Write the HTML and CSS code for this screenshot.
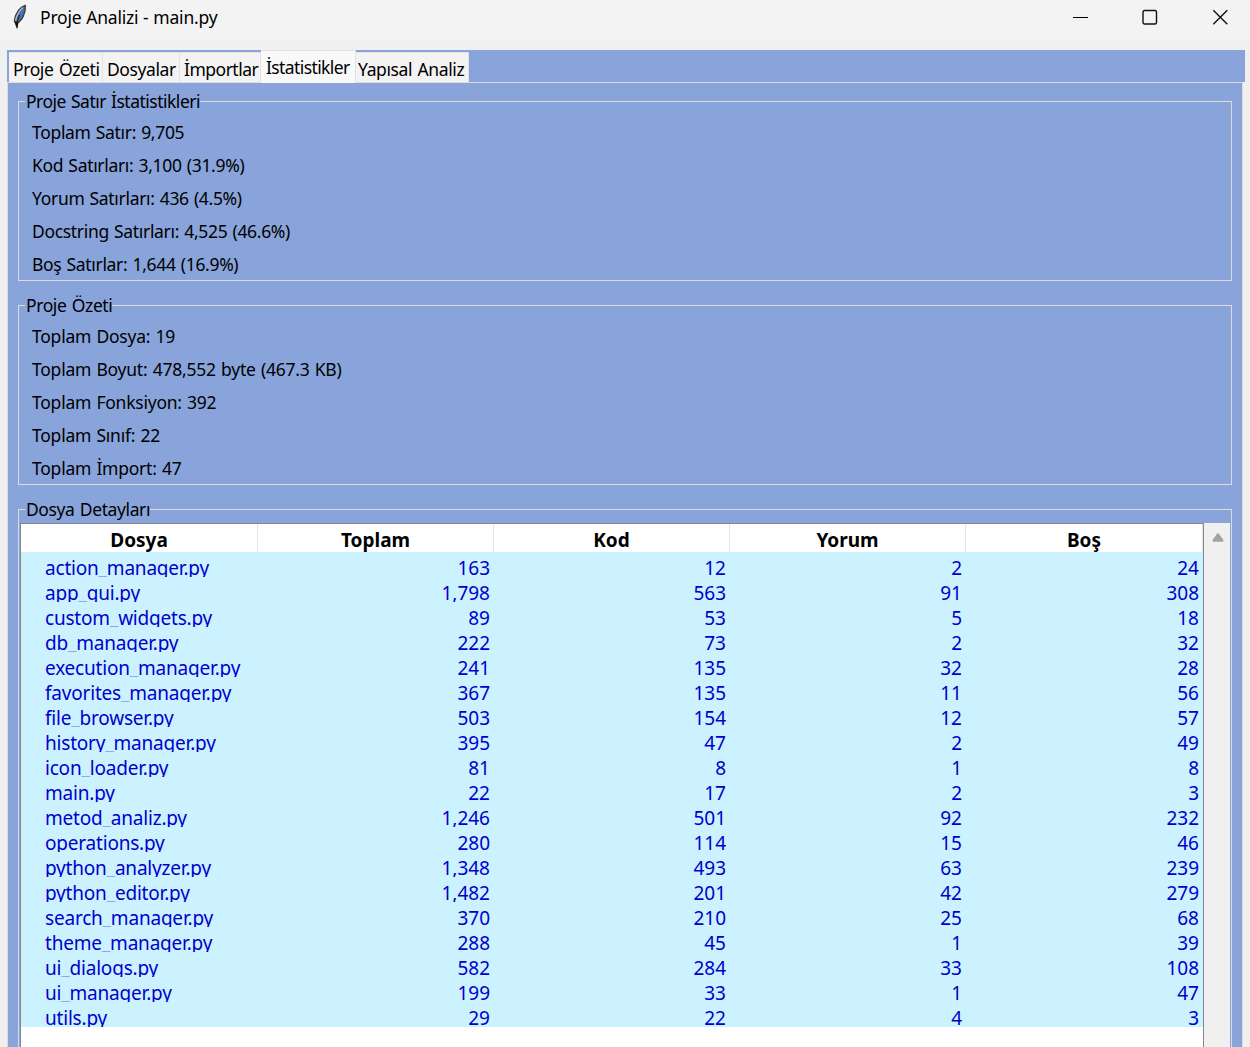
FILE: index.html
```html
<!DOCTYPE html>
<html lang="tr">
<head>
<meta charset="utf-8">
<title>Proje Analizi - main.py</title>
<link rel="stylesheet" href="styles.css">
</head>
<body>
<header class="titlebar">
  <svg class="feather" width="16" height="26" viewBox="0 0 16 26"><path d="M13.300 1.500C9 2.500 3.500 8 2.300 17L4.500 19.500C10 17 14 9 13.300 1.500Z" fill="#3f74ac" stroke="#3a3d40" stroke-width="1.300"/><path d="M11 3.500C6.500 7.500 4.500 12 3.500 17" fill="none" stroke="#a9b4bd" stroke-width="1.500"/><path d="M7.500 11L5 18" fill="none" stroke="#222" stroke-width="1.200"/><path d="M2.300 17.500L6.500 18L5.500 24.500H4.700Z" fill="#111"/></svg>
  <h1 class="title">Proje Analizi - main.py</h1>
  <div class="controls">
    <svg width="16" height="16" viewBox="0 0 16 16"><path d="M1 8.500H16" stroke="#000" stroke-width="1"/></svg>
    <svg width="16" height="16" viewBox="0 0 16 16"><rect x="1" y="1.500" width="13.500" height="13.500" rx="1.500" fill="none" stroke="#111" stroke-width="1.400"/></svg>
    <svg width="16" height="16" viewBox="0 0 16 16"><path d="M1.300 1.300L15.300 15.300M15.300 1.300L1.300 15.300" stroke="#111" stroke-width="1.400"/></svg>
  </div>
</header>
<nav class="tabs">
  <span class="tab t1">Proje Özeti</span><span class="tab t2">Dosyalar</span><span class="tab t3">İmportlar</span><span class="tab t4 active">İstatistikler</span><span class="tab t5">Yapısal Analiz</span>
</nav>
<main class="pane">
  <section class="group">
    <h2 class="legend"><span>Proje Satır İstatistikleri</span></h2>
    <p>Toplam Satır: 9,705</p>
    <p>Kod Satırları: 3,100 (31.9%)</p>
    <p>Yorum Satırları: 436 (4.5%)</p>
    <p>Docstring Satırları: 4,525 (46.6%)</p>
    <p>Boş Satırlar: 1,644 (16.9%)</p>
  </section>
  <section class="group totals">
    <h2 class="legend"><span>Proje Özeti</span></h2>
    <p>Toplam Dosya: 19</p>
    <p>Toplam Boyut: 478,552 byte (467.3 KB)</p>
    <p>Toplam Fonksiyon: 392</p>
    <p>Toplam Sınıf: 22</p>
    <p>Toplam İmport: 47</p>
  </section>
  <section class="group details">
    <h2 class="legend"><span>Dosya Detayları</span></h2>
    <div class="treewrap">
      <div class="tree">
        <div class="row head"><b>Dosya</b><b>Toplam</b><b>Kod</b><b>Yorum</b><b>Boş</b></div>
        <div class="row"><span>action<i>_</i>manager.py</span><span>163</span><span>12</span><span>2</span><span>24</span></div>
        <div class="row"><span>app<i>_</i>gui.py</span><span>1,798</span><span>563</span><span>91</span><span>308</span></div>
        <div class="row"><span>custom<i>_</i>widgets.py</span><span>89</span><span>53</span><span>5</span><span>18</span></div>
        <div class="row"><span>db<i>_</i>manager.py</span><span>222</span><span>73</span><span>2</span><span>32</span></div>
        <div class="row"><span>execution<i>_</i>manager.py</span><span>241</span><span>135</span><span>32</span><span>28</span></div>
        <div class="row"><span>favorites<i>_</i>manager.py</span><span>367</span><span>135</span><span>11</span><span>56</span></div>
        <div class="row"><span>file<i>_</i>browser.py</span><span>503</span><span>154</span><span>12</span><span>57</span></div>
        <div class="row"><span>history<i>_</i>manager.py</span><span>395</span><span>47</span><span>2</span><span>49</span></div>
        <div class="row"><span>icon<i>_</i>loader.py</span><span>81</span><span>8</span><span>1</span><span>8</span></div>
        <div class="row"><span>main.py</span><span>22</span><span>17</span><span>2</span><span>3</span></div>
        <div class="row"><span>metod<i>_</i>analiz.py</span><span>1,246</span><span>501</span><span>92</span><span>232</span></div>
        <div class="row"><span>operations.py</span><span>280</span><span>114</span><span>15</span><span>46</span></div>
        <div class="row"><span>python<i>_</i>analyzer.py</span><span>1,348</span><span>493</span><span>63</span><span>239</span></div>
        <div class="row"><span>python<i>_</i>editor.py</span><span>1,482</span><span>201</span><span>42</span><span>279</span></div>
        <div class="row"><span>search<i>_</i>manager.py</span><span>370</span><span>210</span><span>25</span><span>68</span></div>
        <div class="row"><span>theme<i>_</i>manager.py</span><span>288</span><span>45</span><span>1</span><span>39</span></div>
        <div class="row"><span>ui<i>_</i>dialogs.py</span><span>582</span><span>284</span><span>33</span><span>108</span></div>
        <div class="row"><span>ui<i>_</i>manager.py</span><span>199</span><span>33</span><span>1</span><span>47</span></div>
        <div class="row"><span>utils.py</span><span>29</span><span>22</span><span>4</span><span>3</span></div>
      </div>
      <div class="scrollbar"><svg width="12" height="9" viewBox="0 0 12 9"><path d="M5 .7Q6 -.2 7 .7L11.400 7Q12 8.500 10.500 8.700H1.500Q0 8.500 .6 7Z" fill="#a3a3a3"/></svg></div>
    </div>
  </section>
</main>
</body>
</html>
```
FILE: styles.css
```css
* { box-sizing: border-box; }
body {
  margin: 0;
  width: 1250px;
  height: 1047px;
  overflow: hidden;
  background: #f0f0f0;
  color: #000;
  font: 17.5px/24px "Noto Sans", "Open Sans", sans-serif;
}
h1, h2, p { margin: 0; font: inherit; }
.titlebar {
  display: flex;
  height: 40px;
  padding: 0 22px 0 12px;
  background: #f3f3f3;
}
.feather { margin-top: 4px; }
.title { margin: 5px 0 0 12px; letter-spacing: -.2px; word-spacing: .4px; }
.controls { display: flex; gap: 54px; margin: 9px 0 0 auto; }
.tabs {
  display: flex;
  align-items: flex-end;
  height: 32px;
  margin: 10px 5px 0 7px;
  padding-left: 2px;
  background: #88a4da;
}
.tab {
  height: 30px;
  padding: 4px 0 0 4px;
  background: #f3f3f3;
  border: solid #e3e3e3;
  border-width: 1px 1px 0 0;
  white-space: nowrap;
  line-height: 24px;
  letter-spacing: -.4px;
  word-spacing: 1.4px;
}
.t1 { width: 94px; }
.t2 { width: 77px; }
.t3 { width: 81px; letter-spacing: -.5px; }
.t4 { width: 95px; }
.t5 { width: 113px; padding-left: 2px; }
.tab.active {
  position: relative;
  z-index: 1;
  height: 33px;
  margin-bottom: -1px;
  padding-left: 5px;
  background: #f9f9f9;
  letter-spacing: -.6px;
}
.pane {
  height: 966px;
  margin: 0 7px;
  padding: 18px 10px 0;
  background: #88a4da;
  border: solid #dcdcdc;
  border-width: 1px 1px 0;
  overflow: hidden;
}
.group {
  height: 180px;
  margin-bottom: 24px;
  padding-left: 13px;
  border: 1px solid #dcdcdc;
}
.legend {
  height: 14px;
  margin-left: -7px;
  line-height: 24px;
}
.legend span {
  display: inline-block;
  height: 24px;
  margin-top: -13px;
  padding-left: 1px;
  background: #88a4da;
  vertical-align: top;
  letter-spacing: -.5px;
  word-spacing: 1px;
}
.group p { height: 33px; line-height: 33px; letter-spacing: -.32px; word-spacing: .9px; }
.totals p { letter-spacing: -.24px; word-spacing: 1px; }
.totals .legend span, .details .legend span { letter-spacing: -.4px; word-spacing: 1.2px; }
.details { height: 600px; padding: 0 1px; }
.details .legend { height: 13px; margin-left: 5px; }
.treewrap { display: flex; height: 586px; }
.tree {
  width: 1184px;
  background: #fff;
  border: 1px solid #828790;
}
.row {
  display: grid;
  grid-template-columns: 237px repeat(3, 236px) 1fr;
  height: 25px;
  overflow: hidden;
  background: #ccf2ff;
  color: #0000cd;
  font-size: 19px;
  line-height: 32px;
  text-align: right;
}
.row span { padding-right: 4px; }
.row span:first-child { padding-left: 24px; text-align: left; letter-spacing: -.2px; }
.row i {
  font-style: normal;
  line-height: 0;
  vertical-align: 1px;
  opacity: .3;
}
.row.head {
  height: 28px;
  background: #fff;
  color: #000;
  text-align: center;
}
.head b { border-right: 1px solid #e5e5e5; }
.scrollbar { width: 26px; padding: 10px 0 0 8px; background: #f0f0f0; line-height: 0; }
```
